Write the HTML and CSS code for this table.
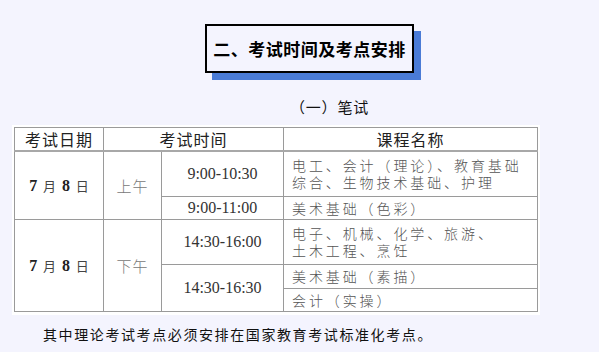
FILE: index.html
```html
<!DOCTYPE html>
<html lang="zh">
<head>
<meta charset="utf-8">
<link rel="stylesheet" href="styles.css">
</head>
<body>
<div class="page">
  <div class="title-row">
    <h2 class="title-box">二、考试时间及考点安排</h2>
  </div>
  <h3 class="sub">（一）笔试</h3>
  <div class="sheet">
    <table class="exam">
      <colgroup>
        <col class="c1"><col class="c2"><col class="c3"><col class="c4">
      </colgroup>
      <tr class="h23 head">
        <th>考试日期</th>
        <th colspan="2">考试时间</th>
        <th>课程名称</th>
      </tr>
      <tr class="h46">
        <td rowspan="2" class="date"><b>7</b> 月 <b>8</b> 日</td>
        <td rowspan="2" class="ap">上午</td>
        <td class="time">9:00-10:30</td>
        <td class="course">电工、会计（理论）、教育基础<br>综合、生物技术基础、护理</td>
      </tr>
      <tr class="h23">
        <td class="time">9:00-11:00</td>
        <td class="course">美术基础（色彩）</td>
      </tr>
      <tr class="h45">
        <td rowspan="3" class="date"><b>7</b> 月 <b>8</b> 日</td>
        <td rowspan="3" class="ap">下午</td>
        <td class="time">14:30-16:00</td>
        <td class="course">电子、机械、化学、旅游、<br>土木工程、烹饪</td>
      </tr>
      <tr class="h24">
        <td rowspan="2" class="time">14:30-16:30</td>
        <td class="course">美术基础（素描）</td>
      </tr>
      <tr class="h23">
        <td class="course">会计（实操）</td>
      </tr>
    </table>
  </div>
  <p class="note">其中理论考试考点必须安排在国家教育考试标准化考点。</p>
</div>
</body>
</html>
```
FILE: styles.css
```css
html, body {
  margin: 0;
  padding: 0;
  background: #f4f4fe;
}
.page {
  width: 599px;
  height: 352px;
  overflow: hidden;
  font-family: "Noto Sans CJK SC", "Noto Sans", sans-serif;
}
.title-row {
  padding: 24px 0 0 205px;
}
.title-box {
  margin: 0;
  width: 205px;
  height: 45px;
  border: 2px solid #000;
  background: #f4f4fe;
  box-shadow: 7px 7px 0 #4a7bd6;
  display: flex;
  align-items: center;
  justify-content: center;
  font-size: 17px;
  font-weight: bold;
  letter-spacing: 0.5px;
  color: #000;
}
.sub {
  margin: 24px 0 0 0;
  padding-left: 290px;
  height: 20px;
  line-height: 20px;
  font-size: 15px;
  font-weight: normal;
  letter-spacing: 0.8px;
  color: #111;
}
.sheet {
  margin: 8px 0 0 12px;
  width: 525px;
  padding: 2px 1px 3px 2px;
  background: #fff;
}
.exam {
  border-collapse: collapse;
  table-layout: fixed;
  width: 523px;
  border: 1px solid #8a8a8a;
}
.c1 { width: 89px; }
.c2 { width: 58px; }
.c3 { width: 122px; }
.c4 { width: 254px; }
.exam th, .exam td {
  border: 1px solid #9a9a9a;
  padding: 0;
  text-align: center;
  vertical-align: middle;
}
.h23 { height: 23px; }
.h24 { height: 24px; }
.h45 { height: 45px; }
.h46 { height: 46px; }
.head th {
  font-size: 16px;
  font-weight: normal;
  letter-spacing: 1px;
  color: #222;
  line-height: 20px;
  border-bottom: 2px solid #a8a8a8;
}
.date {
  font-family: "Noto Sans CJK SC", sans-serif;
  font-size: 13px;
  color: #444;
  word-spacing: 3px;
}
.date b {
  font-family: "Liberation Serif", serif;
  font-size: 16px;
  color: #222;
}
.ap {
  font-size: 15px;
  color: #777;
  letter-spacing: 1px;
  font-weight: 300;
}
.time {
  font-family: "Liberation Serif", serif;
  font-size: 16px;
  color: #333;
}
.exam td.course {
  text-align: left;
  padding-left: 8px;
  font-size: 14px;
  letter-spacing: 2.9px;
  line-height: 17px;
  color: #555;
  font-weight: 300;
}
.note {
  margin: 9px 0 0 43px;
  font-size: 14px;
  line-height: 20px;
  letter-spacing: 1.6px;
  color: #111;
}
```
